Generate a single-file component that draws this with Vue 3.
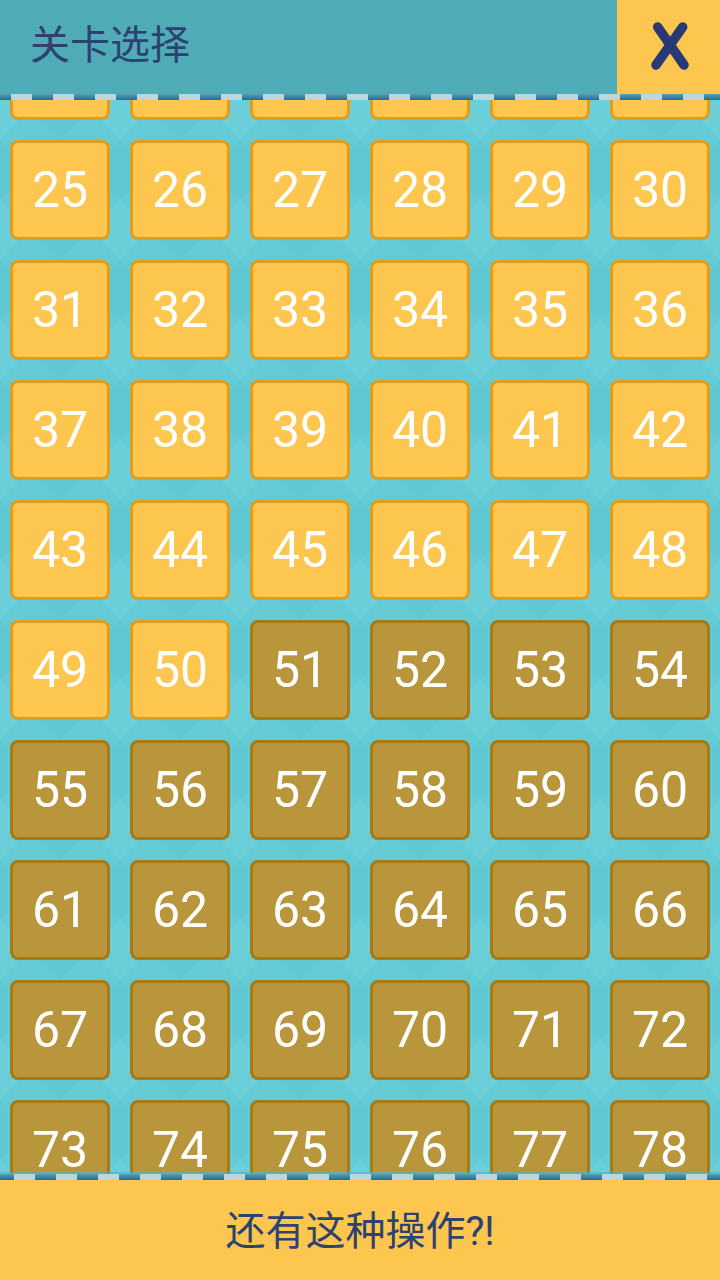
<script setup>
const levels = Array.from({ length: 60 }, (_, i) => i + 19)
</script>

<template>
  <div class="page">
    <header class="top">
      <div class="title">关卡选择</div>
      <button class="close" aria-label="关闭">
        <svg width="44" height="54" viewBox="0 0 44 54">
          <path d="M9.7 7 L36 45 M34.7 7 L8 45" stroke="#283a76" stroke-width="9.5" stroke-linecap="round" fill="none" />
        </svg>
      </button>
    </header>
    <div class="dashes"></div>
    <main class="board">
      <div class="grid">
        <div v-for="n in levels" :key="n" class="tile" :class="{ locked: n > 50 }">{{ n }}</div>
      </div>
    </main>
    <div class="dashes bottom"></div>
    <footer class="foot">还有这种操作?!</footer>
  </div>
</template>

<style>
html, body { margin: 0; padding: 0; }
</style>

<style scoped>
.page {
  width: 720px;
  height: 1280px;
  display: flex;
  flex-direction: column;
  overflow: hidden;
  background-color: #6acfd9;
  background-image:
    repeating-linear-gradient(45deg, rgba(70,185,198,.17) 0 42.43px, transparent 42.43px 84.85px),
    repeating-linear-gradient(-45deg, rgba(70,185,198,.17) 0 42.43px, transparent 42.43px 84.85px);
  font-family: Roboto, "Noto Sans CJK SC", sans-serif;
}
.top {
  height: 94px;
  flex: none;
  display: flex;
  justify-content: space-between;
  background: #4fabb5;
}
.title {
  padding: 20px 0 0 30px;
  font-size: 40px;
  line-height: 52px;
  color: #2e4272;
}
.close {
  width: 103px;
  border: 0;
  padding: 0 0 0 3px;
  background: #fcc64f;
  display: flex;
  align-items: center;
  justify-content: center;
}
.dashes {
  height: 6px;
  flex: none;
  background-image:
    linear-gradient(90deg, #bdd6de 0 21px, transparent 21px 42px),
    linear-gradient(180deg, #5a9db3 0, #1f6f92 100%);
  background-size: 42px 100%, 100% 100%;
  background-position: 11px 0, 0 0;
  position: relative;
  z-index: 2;
}
.dashes.bottom {
  background-position: 14px 0, 0 0;
  box-shadow: 0 -2px 0 rgba(86, 178, 190, .7);
}
.board {
  flex: 1;
  overflow: hidden;
  min-height: 0;
}
.grid {
  display: grid;
  grid-template-columns: repeat(6, 100px);
  gap: 20px;
  padding-left: 10px;
  margin-top: -80px;
}
.tile {
  box-sizing: border-box;
  height: 100px;
  display: flex;
  align-items: center;
  justify-content: center;
  border: 3px solid #e09e20;
  border-radius: 8px;
  background: #fcc64f;
  color: #fff;
  font-size: 50px;
}
.tile.locked {
  background: #b9963c;
  border-color: #a87a14;
}
.foot {
  height: 100px;
  flex: none;
  box-sizing: border-box;
  padding-bottom: 4px;
  display: flex;
  align-items: center;
  justify-content: center;
  background: #fcc64f;
  color: #2e4272;
  font-size: 40px;
}
</style>
